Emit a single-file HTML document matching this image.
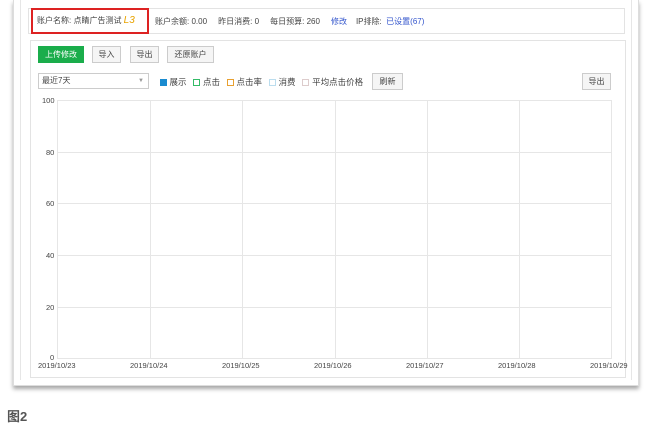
<!DOCTYPE html>
<html><head><meta charset="utf-8"><style>
*{margin:0;padding:0;box-sizing:border-box}
body{width:655px;height:427px;background:#fff;position:relative;overflow:hidden;font-family:"Liberation Sans","Noto Sans CJK SC",sans-serif;font-size:8px;color:#444}
.a{position:absolute}
.btn{position:absolute;top:46px;height:17px;border:1px solid #ccc;background:#f5f5f5;font-size:8px;line-height:15px;text-align:center;color:#444}
.lg{display:inline-block;width:7px;height:7px;border:1px solid;vertical-align:-1px;margin-right:3px;margin-left:6.5px}
.t{position:absolute;font-size:7.5px;color:#444}
</style></head><body>
<div class="a" style="left:13px;top:0;width:626px;height:386px;border:1px solid #ddd;border-top:none;box-shadow:0 3px 4px rgba(0,0,0,.35);background:#fff"></div>
<div class="a" style="left:20px;top:0;width:1px;height:380px;background:#e6e6e6"></div>
<div class="a" style="left:631px;top:0;width:1px;height:380px;background:#e6e6e6"></div>
<div class="a" style="left:28px;top:8px;width:597px;height:26px;border:1px solid #e3e3e3"></div>
<div class="a" style="left:31px;top:8px;width:118px;height:26px;border:2px solid #d22"></div>
<div class="a" style="left:37px;top:15px;white-space:nowrap;font-size:8px">账户名称: 点睛广告测试 <span style="color:#e8a300;font-style:italic;font-size:10px">L3</span></div>
<div class="a" style="left:155px;top:16px;white-space:nowrap;font-size:8px">账户余额: 0.00 &nbsp;&nbsp;&nbsp; 昨日消费: 0 &nbsp;&nbsp;&nbsp; 每日预算: 260 &nbsp;&nbsp;&nbsp; <span style="color:#3355cc">修改</span> &nbsp;&nbsp; IP排除: &nbsp;<span style="color:#3355cc">已设置(67)</span></div>
<div class="a" style="left:30px;top:40px;width:596px;height:338px;border:1px solid #e3e3e3"></div>
<div class="btn" style="left:38px;width:46px;background:#1aad4b;border-color:#1aad4b;color:#fff">上传修改</div>
<div class="btn" style="left:92px;width:29px">导入</div>
<div class="btn" style="left:130px;width:29px">导出</div>
<div class="btn" style="left:167px;width:47px">还原账户</div>
<div class="a" style="left:38px;top:73px;width:111px;height:16px;border:1px solid #ccc;line-height:14px;padding-left:3px">最近7天<span style="position:absolute;right:4px;color:#999;font-size:6px">▼</span></div>
<div class="a" style="left:153px;top:76px;white-space:nowrap;font-size:8.5px"><span class="lg" style="background:#1a8bd0;border-color:#1a8bd0"></span>展示<span class="lg" style="border-color:#3b6"></span>点击<span class="lg" style="border-color:#e8a030"></span>点击率<span class="lg" style="border-color:#bde"></span>消费<span class="lg" style="border-color:#dcc"></span>平均点击价格</div>
<div class="btn" style="left:372px;top:73px;width:31px">刷新</div>
<div class="btn" style="left:582px;top:73px;width:29px">导出</div>
<svg class="a" style="left:0;top:0" width="655" height="427">
<g stroke="#e6e6e6" stroke-width="1">
<line x1="57.5" y1="100" x2="57.5" y2="358"/><line x1="150.5" y1="100" x2="150.5" y2="358"/><line x1="242.5" y1="100" x2="242.5" y2="358"/><line x1="335.5" y1="100" x2="335.5" y2="358"/><line x1="427.5" y1="100" x2="427.5" y2="358"/><line x1="519.5" y1="100" x2="519.5" y2="358"/><line x1="611.5" y1="100" x2="611.5" y2="358"/>
<line x1="57" y1="100.5" x2="612" y2="100.5"/><line x1="57" y1="152.5" x2="612" y2="152.5"/><line x1="57" y1="203.5" x2="612" y2="203.5"/><line x1="57" y1="255.5" x2="612" y2="255.5"/><line x1="57" y1="307.5" x2="612" y2="307.5"/><line x1="57" y1="358.5" x2="612" y2="358.5"/>
</g></svg>
<div class="t" style="left:42px;top:96px">100</div>
<div class="t" style="left:46px;top:148px">80</div>
<div class="t" style="left:46px;top:199px">60</div>
<div class="t" style="left:46px;top:251px">40</div>
<div class="t" style="left:46px;top:303px">20</div>
<div class="t" style="left:50px;top:353px">0</div>
<div class="t" style="left:38px;top:361px">2019/10/23</div>
<div class="t" style="left:130px;top:361px">2019/10/24</div>
<div class="t" style="left:222px;top:361px">2019/10/25</div>
<div class="t" style="left:314px;top:361px">2019/10/26</div>
<div class="t" style="left:406px;top:361px">2019/10/27</div>
<div class="t" style="left:498px;top:361px">2019/10/28</div>
<div class="t" style="left:590px;top:361px">2019/10/29</div>
<div class="a" style="left:7px;top:406px;font-size:13px;font-weight:bold;color:#555">图2</div>
</body></html>
